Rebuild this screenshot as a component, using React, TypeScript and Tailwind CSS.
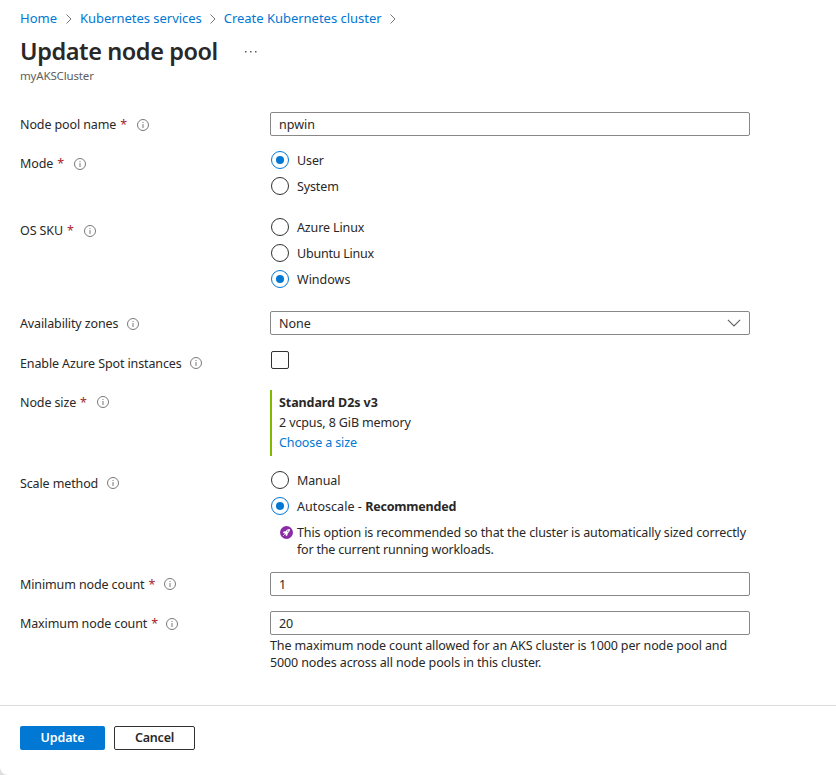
import type { ReactNode } from "react";

function InfoIcon({ className = "" }: { className?: string }) {
  return (
    <svg className={`shrink-0 ${className}`} width="12" height="12" viewBox="0 0 12 12" fill="none">
      <circle cx="6" cy="6" r="5.5" stroke="#7a7977" />
      <path d="M6 5v4" stroke="#7a7977" />
      <path d="M6 3v1" stroke="#7a7977" />
    </svg>
  );
}

function Crumb({ children, className }: { children: ReactNode; className: string }) {
  return (
    <>
      <a className={`whitespace-nowrap text-[#0078d4] ${className}`}>{children}</a>
      <svg className="mt-px shrink-0" width="6" height="10" viewBox="0 0 6 10" fill="none" stroke="#797775">
        <path d="M0.5 0.5 5 5 0.5 9.5" />
      </svg>
    </>
  );
}

type RowProps = {
  label: string;
  labelWidth: string;
  iconClass?: string;
  required?: boolean;
  className?: string;
  children: ReactNode;
};

function Row({ label, labelWidth, iconClass, required, className = "", children }: RowProps) {
  return (
    <div className={`flex items-start ${className}`}>
      <div className="flex h-6 w-[250px] shrink-0 items-center">
        <div className={`flex shrink-0 items-center whitespace-nowrap ${labelWidth}`}>
          {label}
          {required && <span className="ml-1 text-[#a4262c]">*</span>}
        </div>
        <InfoIcon className={iconClass} />
      </div>
      <div className="w-[480px] shrink-0">{children}</div>
    </div>
  );
}

function Field({ children }: { children: ReactNode }) {
  return (
    <div className="flex h-6 items-center justify-between rounded-[2px] border border-[#8a8886] pr-2 pl-2">
      {children}
    </div>
  );
}

function Radio({ checked, children }: { checked?: boolean; children: ReactNode }) {
  return (
    <div className="flex h-[18px] items-center whitespace-nowrap pl-px">
      <span
        className={`mr-2 flex size-[18px] shrink-0 items-center justify-center rounded-full border ${
          checked ? "border-[#0078d4]" : "border-[#323130]"
        }`}
      >
        {checked && <span className="size-2 rounded-full bg-[#0078d4]" />}
      </span>
      {children}
    </div>
  );
}

function RocketBadge() {
  return (
    <svg className="mt-[2px] shrink-0" width="13" height="13" viewBox="0 0 13 13">
      <circle cx="6.5" cy="6.5" r="6.5" fill="#8a2da5" />
      <path d="M10 3C8 3 6.6 3.9 5.6 5.3L3.7 5.6 2.8 7l1.5.2L5.8 8.7 6 10.2l1.4-.9.3-1.9C9.1 6.4 10 5 10 3Z" fill="#fff" />
      <path d="M3.3 9.7 4.6 8.4" stroke="#fff" strokeWidth="1" />
      <circle cx="7.8" cy="5.2" r="0.6" fill="#8a2da5" />
    </svg>
  );
}

export default function App() {
  return (
    <div className="h-[775px] w-[836px] overflow-hidden bg-[#dedede]">
      <div className="flex h-full flex-col rounded-bl-lg bg-white font-['Noto_Sans','Open_Sans',sans-serif] text-[12.5px] leading-[17px] tracking-[-0.12px] text-[#292827]">
        <header className="h-28 shrink-0 pl-5">
          <nav className="flex h-[37px] items-center gap-2 text-[13px]">
            <Crumb className="mr-px tracking-normal">Home</Crumb>
            <Crumb className="tracking-[-0.04px]">Kubernetes services</Crumb>
            <Crumb className="tracking-[-0.02px]">Create Kubernetes cluster</Crumb>
          </nav>
          <div className="flex h-[30px] items-center">
            <h1 className="-mt-0.5 w-[225px] whitespace-nowrap text-[23.5px] leading-[30px] font-semibold tracking-[-0.42px]">
              Update node pool
            </h1>
            <svg width="12" height="2" viewBox="0 0 12 2" fill="#605e5c">
              <rect x="0" width="1.5" height="1.5" />
              <rect x="5" width="1.5" height="1.5" />
              <rect x="10" width="1.5" height="1.5" />
            </svg>
          </div>
          <p className="text-[11.5px] tracking-[-0.16px] text-[#605e5c]">myAKSCluster</p>
        </header>

        <main className="flex h-[593px] shrink-0 flex-col pl-5">
          <Row label="Node pool name" labelWidth="w-[117px]" iconClass="mt-0.5" required>
            <Field>
              <span className="tracking-normal">npwin</span>
            </Field>
          </Row>
          <Row label="Mode" labelWidth="w-[54px]" iconClass="mt-0.5" required className="mt-[15px]">
            <div className="flex flex-col gap-2">
              <Radio checked>User</Radio>
              <Radio>System</Radio>
            </div>
          </Row>
          <Row label="OS SKU" labelWidth="w-16" iconClass="mt-0.5" required className="mt-[23px]">
            <div className="flex flex-col gap-2">
              <Radio>Azure Linux</Radio>
              <Radio>
                <span className="tracking-[-0.22px]">Ubuntu Linux</span>
              </Radio>
              <Radio checked>
                <span className="tracking-normal">Windows</span>
              </Radio>
            </div>
          </Row>
          <Row label="Availability zones" labelWidth="w-[107px]" iconClass="mt-0.5" className="mt-[23px]">
            <Field>
              <span className="tracking-normal">None</span>
              <svg width="14" height="8" viewBox="0 0 14 8" fill="none" stroke="#605e5c" strokeWidth="1.1">
                <path d="M0.9 0.9 7 7 13.1 0.9" />
              </svg>
            </Field>
          </Row>
          <Row label="Enable Azure Spot instances" labelWidth="w-[170px]" className="mt-4">
            <div className="ml-px size-[18px] rounded-[2px] border border-[#323130]" />
          </Row>
          <Row label="Node size" labelWidth="w-[77px]" required className="mt-[15px]">
            <div className="h-[66px] border-l-2 border-[#7fba00] pt-[3px] pl-[7px] leading-5">
              <p className="font-bold tracking-[-0.08px]">Standard D2s v3</p>
              <p>2 vcpus, 8 GiB memory</p>
              <p className="text-[#0078d4]">Choose a size</p>
            </div>
          </Row>
          <Row label="Scale method" labelWidth="w-[87px]" className="mt-[15px]">
            <div className="flex flex-col gap-2">
              <Radio>Manual</Radio>
              <Radio checked>
                <span className="whitespace-pre tracking-[0.05px]">Autoscale - </span>
                <b className="tracking-[-0.2px]">Recommended</b>
              </Radio>
            </div>
            <div className="mt-[9px] flex gap-1 pl-[10px]">
              <RocketBadge />
              <p className="whitespace-nowrap">
                This option is recommended so that the cluster is automatically sized correctly
                <br />
                <span className="tracking-[-0.2px]">for the current running workloads.</span>
              </p>
            </div>
          </Row>
          <Row label="Minimum node count" labelWidth="w-36" required className="mt-[14px]">
            <Field>1</Field>
          </Row>
          <Row label="Maximum node count" labelWidth="w-[146px]" iconClass="mt-0.5" required className="mt-[15px]">
            <Field>20</Field>
            <p className="mt-[2px] whitespace-nowrap">
              The maximum node count allowed for an AKS cluster is 1000 per node pool and
              <br />
              5000 nodes across all node pools in this cluster.
            </p>
          </Row>
        </main>

        <footer className="flex grow gap-[9px] border-t border-[#dcdbda] pt-5 pl-5 font-semibold">
          <button className="h-6 w-[85px] rounded-[2px] bg-[#0078d4] pb-0.5 tracking-[-0.1px] text-white">Update</button>
          <button className="h-6 w-[81px] rounded-[2px] border border-[#323130] pb-0.5 tracking-[-0.2px]">Cancel</button>
        </footer>
      </div>
    </div>
  );
}
